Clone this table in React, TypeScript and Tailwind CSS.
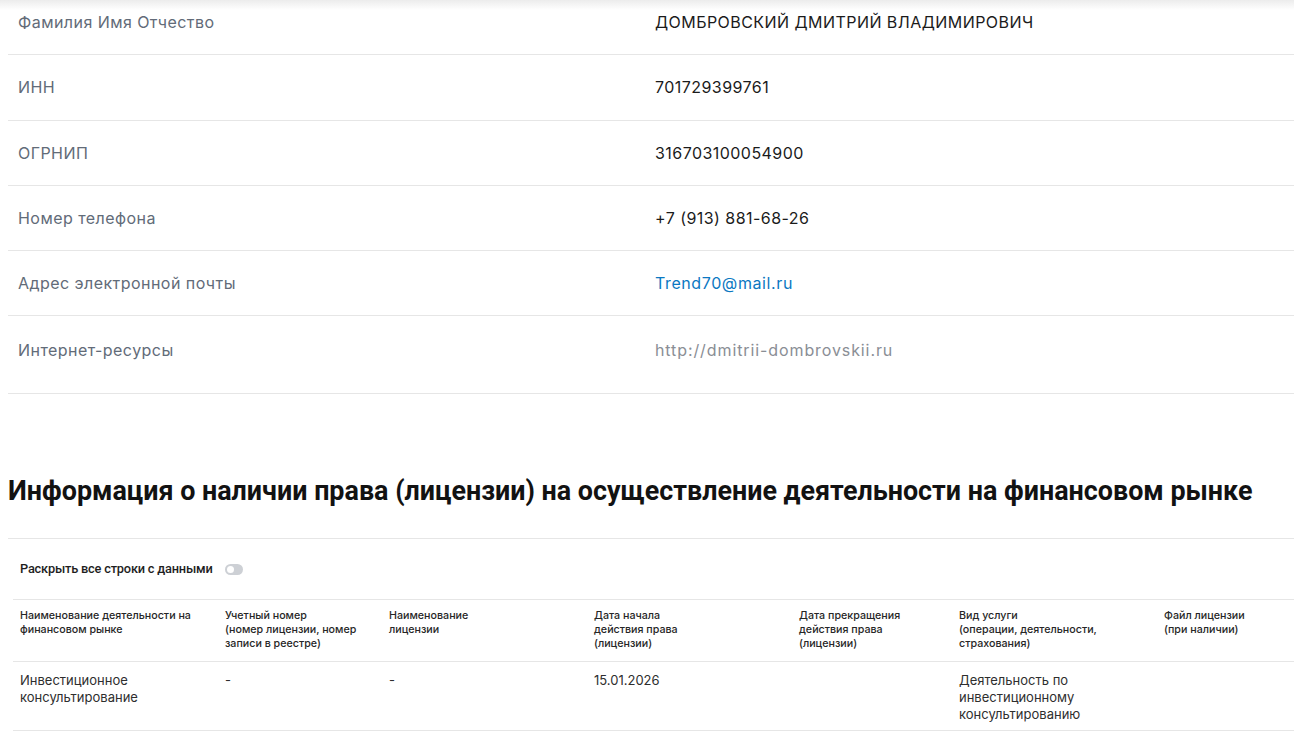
import React from "react";

const rows: { label: string; value: string; kind?: "email" | "url" }[] = [
  { label: "Фамилия Имя Отчество", value: "ДОМБРОВСКИЙ ДМИТРИЙ ВЛАДИМИРОВИЧ" },
  { label: "ИНН", value: "701729399761" },
  { label: "ОГРНИП", value: "316703100054900" },
  { label: "Номер телефона", value: "+7 (913) 881-68-26" },
  { label: "Адрес электронной почты", value: "Trend70@mail.ru", kind: "email" },
  { label: "Интернет-ресурсы", value: "http://dmitrii-dombrovskii.ru", kind: "url" },
];

const headers = [
  "Наименование деятельности на финансовом рынке",
  "Учетный номер\n(номер лицензии, номер записи в реестре)",
  "Наименование\nлицензии",
  "Дата начала\nдействия права\n(лицензии)",
  "Дата прекращения\nдействия права\n(лицензии)",
  "Вид услуги\n(операции, деятельности,\nстрахования)",
  "Файл лицензии\n(при наличии)",
];

const body = [
  "Инвестиционное консультирование",
  "-",
  "-",
  "15.01.2026",
  "",
  "Деятельность по инвестиционному консультированию",
  "",
];

const cols = "grid grid-cols-[205px_164px_205px_205px_160px_205px_1fr]";

export default function App() {
  return (
    <div className="relative w-[1294px] h-[738px] overflow-hidden bg-white" style={{ fontFamily: "Inter, 'Noto Sans', sans-serif" }}>
      <div className="absolute top-0 left-0 right-0 h-[10px] bg-gradient-to-b from-[#ececec] to-transparent z-10" />
      <div className="-mt-[10px] pl-[8px]">
        {rows.map((r, i) => {
          const last = i === rows.length - 1;
          return (
            <div
              key={r.label}
              className={`flex border-b border-[#e6e6e6] text-[16px] leading-[22.25px] tracking-[0.45px] ${last ? "pt-[23px] pb-[31.5px]" : "py-[21px]"}`}
            >
              <div className="w-[647px] pl-[10px] text-[#626b78]">{r.label}</div>
              <div
                className={
                  r.kind === "email"
                    ? "text-[#0b78c2] tracking-[0.6px]"
                    : r.kind === "url"
                    ? "text-[#8a8e95] tracking-[0.9px]"
                    : "text-[#1b1b1b]"
                }
              >
                {r.value}
              </div>
            </div>
          );
        })}

        <h2
          className="mt-[80px] text-[26.9px] leading-[34px] font-bold text-[#121212]"
          style={{ fontFamily: "Roboto, 'Noto Sans', sans-serif" }}
        >
          Информация о наличии права (лицензии) на осуществление деятельности на финансовом рынке
        </h2>

        <div className="mt-[30px] border-t border-[#e6e6e6] h-[61px] flex items-center pl-[12px] gap-[12px]" style={{ fontFamily: "Roboto, 'Noto Sans', sans-serif" }}>
          <span className="text-[12.8px] font-medium text-[#1e1e1e] tracking-[-0.2px]">Раскрыть все строки с данными</span>
          <span className="relative w-[18px] h-[11px] rounded-full bg-[#cdd0d5]">
            <span className="absolute left-[2px] top-[2px] w-[7px] h-[7px] rounded-full bg-white" />
          </span>
        </div>

        <div className="ml-[5px] border-t border-[#e6e6e6]" style={{ fontFamily: "Inter, 'Noto Sans', sans-serif" }}>
          <div className={`${cols} border-b border-[#e6e6e6] pt-[9px] pb-[10px]`}>
            {headers.map((h, i) => (
              <div key={i} className="pl-[7px] pr-[10px] text-[10.7px] leading-[14px] font-medium text-[#262626] whitespace-pre-line">
                {h}
              </div>
            ))}
          </div>
          <div className={`${cols} border-b border-[#e6e6e6] pt-[10px] pb-[7px] min-h-[69px]`}>
            {body.map((b, i) => (
              <div key={i} className="pl-[7px] pr-[14px] text-[13px] leading-[17px] text-[#2e2e2e]">
                {b}
              </div>
            ))}
          </div>
        </div>
      </div>
    </div>
  );
}
